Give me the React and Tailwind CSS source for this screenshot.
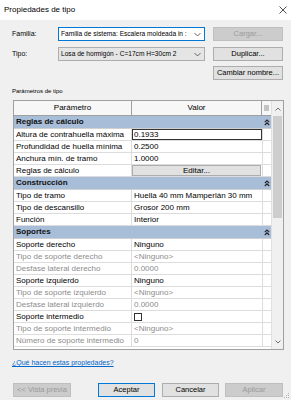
import React from "react";

const rows = [
  { type: "group", label: "Reglas de cálculo" },
  { label: "Altura de contrahuella máxima", value: "0.1933", selected: true },
  { label: "Profundidad de huella mínima", value: "0.2500" },
  { label: "Anchura mín. de tramo", value: "1.0000" },
  { label: "Reglas de cálculo", button: "Editar..." },
  { type: "group", label: "Construcción" },
  { label: "Tipo de tramo", value: "Huella 40 mm Mamperlán 30 mm" },
  { label: "Tipo de descansillo", value: "Grosor 200 mm" },
  { label: "Función", value: "Interior" },
  { type: "group", label: "Soportes" },
  { label: "Soporte derecho", value: "Ninguno" },
  { label: "Tipo de soporte derecho", value: "<Ninguno>", disabled: true },
  { label: "Desfase lateral derecho", value: "0.0000", disabled: true },
  { label: "Soporte izquierdo", value: "Ninguno" },
  { label: "Tipo de soporte izquierdo", value: "<Ninguno>", disabled: true },
  { label: "Desfase lateral izquierdo", value: "0.0000", disabled: true },
  { label: "Soporte intermedio", checkbox: true },
  { label: "Tipo de soporte intermedio", value: "<Ninguno>", disabled: true },
  { label: "Número de soporte intermedio", value: "0", disabled: true },
];

function Chevron() {
  return (
    <svg width="7" height="5" viewBox="0 0 7 5" className="shrink-0">
      <path d="M0.5 1 L3.5 4 L6.5 1" fill="none" stroke="#555" strokeWidth="0.9" />
    </svg>
  );
}

function Collapse() {
  return (
    <svg width="6" height="7" viewBox="0 0 6 7">
      <path d="M0.8 3.2 L3 1 L5.2 3.2 M0.8 6 L3 3.8 L5.2 6" fill="none" stroke="#222" strokeWidth="1.1" />
    </svg>
  );
}

function Btn({ children, disabled, primary, className = "" }) {
  return (
    <div
      className={`h-[14px] flex items-center justify-center text-[7.5px] border ${
        disabled
          ? "bg-[#cccccc] border-[#bfbfbf] text-[#9a9a9a]"
          : primary
          ? "bg-[#e1e1e1] border-[#0078d7] text-black"
          : "bg-[#e1e1e1] border-[#adadad] text-black"
      } ${className}`}
    >
      {children}
    </div>
  );
}

function Row({ row }) {
  if (row.type === "group") {
    return (
      <div className="h-[13px] flex items-center bg-[#a7bdd8] border-b border-[#d0d0d0]">
        <div className="w-[249px] pl-[2px] text-[8px] font-bold text-[#111]">{row.label}</div>
        <div className="w-[8px] flex justify-center">
          <Collapse />
        </div>
      </div>
    );
  }
  const tc = row.disabled ? "text-[#8c8c8c]" : "text-black";
  return (
    <div className="h-[12px] flex bg-white border-b border-[#dcdcdc]">
      <div className={`w-[118px] pl-[2px] flex items-center text-[8px] border-r border-[#dcdcdc] whitespace-nowrap overflow-hidden ${tc}`}>
        {row.label}
      </div>
      <div
        className={`w-[130px] flex items-center text-[8px] ${tc} ${
          row.selected ? "border border-[#333] pl-[1px]" : row.button ? "" : "pl-[2px]"
        }`}
      >
        {row.button ? (
          <div className="w-[129px] h-[11px] bg-[#e1e1e1] border border-[#adadad] flex items-center justify-center">
            {row.button}
          </div>
        ) : row.checkbox ? (
          <div className="w-[8px] h-[8px] border border-[#333] bg-white" />
        ) : (
          row.value
        )}
      </div>
      <div className="w-[8px] border-l border-[#dcdcdc]" />
    </div>
  );
}

export default function App() {
  return (
    <div className="w-[291px] h-[400px] bg-[#f0f0f0] relative overflow-hidden font-['Liberation_Sans',Arial,sans-serif] text-black">
      <div className="h-[20px] bg-white flex items-center justify-between pl-[4px] pr-[4px]">
        <span className="text-[8px]">Propiedades de tipo</span>
        <svg width="8" height="8" viewBox="0 0 8 8">
          <path d="M0.5 0.5 L7.5 7.5 M7.5 0.5 L0.5 7.5" stroke="#222" strokeWidth="0.8" />
        </svg>
      </div>

      <div className="pl-[12px] pr-[8px] pt-[7px] flex flex-col">
        <div className="flex items-center h-[14px]">
          <span className="w-[46px] text-[7px]">Familia:</span>
          <div className="w-[147px] h-[14px] bg-white border border-[#0078d7] flex items-center justify-between pl-[2px] pr-[3px] text-[6.6px] whitespace-nowrap overflow-hidden">
            <span>Familia de sistema: Escalera moldeada in :</span>
            <Chevron />
          </div>
          <Btn disabled className="w-[70px] ml-[8px]">Cargar...</Btn>
        </div>
        <div className="flex items-center h-[14px] mt-[6px]">
          <span className="w-[46px] text-[7px]">Tipo:</span>
          <div className="w-[147px] h-[14px] bg-[#e5e5e5] border border-[#adadad] flex items-center justify-between pl-[2px] pr-[3px] text-[6.6px] whitespace-nowrap overflow-hidden">
            <span>Losa de hormigón - C=17cm H=30cm 2</span>
            <Chevron />
          </div>
          <Btn className="w-[70px] ml-[8px]">Duplicar...</Btn>
        </div>
        <div className="flex justify-end h-[14px] mt-[5px]">
          <Btn className="w-[70px]">Cambiar nombre...</Btn>
        </div>
        <div className="text-[6px] mt-[7px] h-[8px] leading-[8px]">Parámetros de tipo</div>
      </div>

      <div className="ml-[13px] mt-[5px] w-[271px] h-[250px] border border-[#a0a0a0] flex bg-white overflow-hidden">
        <div className="w-[257px] flex flex-col">
          <div className="h-[15px] flex bg-[#f7f7f7] border-b border-[#a0a0a0] text-[8px]">
            <div className="w-[118px] flex items-center justify-center border-r border-[#a0a0a0]">Parámetro</div>
            <div className="w-[130px] flex items-center justify-center border-r border-[#a0a0a0]">Valor</div>
            <div className="w-[8px] flex items-center justify-center">
              <svg width="5" height="6" viewBox="0 0 5 6">
                <path d="M0 1 H5 M0 3 H5 M0 5 H5" stroke="#777" strokeWidth="0.8" />
              </svg>
            </div>
          </div>
          {rows.map((row, i) => (
            <Row key={i} row={row} />
          ))}
        </div>
        <div className="w-[12px] bg-[#f0f0f0] border-l border-[#e0e0e0] flex flex-col items-center">
          <div className="h-[15px] flex items-center justify-center">
            <svg width="6" height="4" viewBox="0 0 6 4">
              <path d="M0.5 3.5 L3 1 L5.5 3.5" fill="none" stroke="#606060" strokeWidth="0.9" />
            </svg>
          </div>
          <div className="w-[9px] h-[102px] bg-[#cdcdcd]" />
          <div className="flex-1" />
          <div className="h-[14px] flex items-center justify-center">
            <svg width="6" height="4" viewBox="0 0 6 4">
              <path d="M0.5 0.5 L3 3 L5.5 0.5" fill="none" stroke="#606060" strokeWidth="0.9" />
            </svg>
          </div>
        </div>
      </div>

      <div className="ml-[12px] mt-[8px] text-[7px] text-[#0066cc] underline">¿Qué hacen estas propiedades?</div>

      <div className="flex pl-[13px] mt-[14px]">
        <Btn disabled className="w-[58px]">&lt;&lt; Vista previa</Btn>
        <Btn primary className="w-[57px] ml-[27px]">Aceptar</Btn>
        <Btn className="w-[57px] ml-[7px]">Cancelar</Btn>
        <Btn disabled className="w-[58px] ml-[6px]">Aplicar</Btn>
      </div>

      <svg width="6" height="6" viewBox="0 0 6 6" className="absolute right-[1px] bottom-[1px]">
        <rect x="4" y="0" width="1" height="1" fill="#b0b0b0" />
        <rect x="2" y="2" width="1" height="1" fill="#b0b0b0" />
        <rect x="4" y="2" width="1" height="1" fill="#b0b0b0" />
        <rect x="0" y="4" width="1" height="1" fill="#b0b0b0" />
        <rect x="2" y="4" width="1" height="1" fill="#b0b0b0" />
        <rect x="4" y="4" width="1" height="1" fill="#b0b0b0" />
      </svg>
    </div>
  );
}
